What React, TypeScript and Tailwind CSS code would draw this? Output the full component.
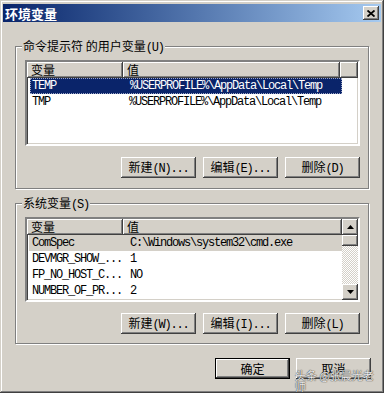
const raised =
  "shadow-[inset_-1px_-1px_#404040,inset_1px_1px_#fff,inset_-2px_-2px_#808080,inset_2px_2px_#d4d0c8]"
const mono = "font-['Liberation_Mono',monospace] text-[12px] tracking-[-1.2px]"

const Label = ({ cn, en }: { cn: string; en: string }) => (
  <span className="whitespace-pre">
    <span>{cn}</span>
    <span className={mono}>{en}</span>
  </span>
)

const Button = ({ children, isDefault }: { children: React.ReactNode; isDefault?: boolean }) => (
  <div className={`w-[75px] h-[21px] ${isDefault ? "border border-black" : ""}`}>
    <div className={`size-full flex items-center justify-center bg-[#d4d0c8] leading-none ${raised}`}>
      {children}
    </div>
  </div>
)

const Group = ({
  legend,
  children,
  className,
}: {
  legend: React.ReactNode
  children: React.ReactNode
  className?: string
}) => (
  <div
    className={`relative ml-[12px] w-[354px] border border-[#808080] shadow-[inset_1px_1px_#fff,1px_1px_#fff] pt-[13px] pl-[9px] ${className}`}
  >
    <div className="absolute left-[6px] -top-[9px] px-[1px] bg-[#d4d0c8] leading-[16px]">{legend}</div>
    {children}
  </div>
)

const Header = ({ children, w }: { children?: React.ReactNode; w: string }) => (
  <div className={`${w} h-[16px] pl-[4px] leading-[16px] bg-[#d4d0c8] ${raised}`}>{children}</div>
)

const sunken =
  "border-2 border-t-[#808080] border-l-[#808080] border-r-white border-b-white shadow-[inset_1px_1px_#404040,inset_-1px_-1px_#d4d0c8] bg-white"

const Arrow = ({ down }: { down?: boolean }) => (
  <svg width="7" height="4" viewBox="0 0 7 4">
    <path d={down ? "M0 0h7L3.5 4z" : "M0 4h7L3.5 0z"} fill="#000" />
  </svg>
)

const sysRows = [
  ["DEVMGR_SHOW_...", "1"],
  ["FP_NO_HOST_C...", "NO"],
  ["NUMBER_OF_PR...", "2"],
]

export default function App() {
  return (
    <div className="relative w-[384px] h-[393px] bg-[#d4d0c8] p-[3px] shadow-[inset_-1px_-1px_#404040,inset_1px_1px_#d4d0c8,inset_-2px_-2px_#808080,inset_2px_2px_#fff] font-['Noto_Sans_CJK_SC',sans-serif] text-[12px] text-black">
      {/* title bar */}
      <div className="mt-[1px] h-[18px] flex items-center justify-between bg-gradient-to-r from-[#0a246a] to-[#a6caf0] pl-[2px] pr-[2px]">
        <span className="text-white font-bold text-[13px] leading-none">环境变量</span>
        <div className={`w-[16px] h-[14px] flex items-center justify-center bg-[#d4d0c8] ${raised}`}>
          <svg width="8" height="7" viewBox="0 0 8 7">
            <path d="M0.5 0.5L7.5 6.5M7.5 0.5L0.5 6.5" stroke="#000" strokeWidth="1.8" />
          </svg>
        </div>
      </div>

      <Group className="mt-[24px] h-[143px]" legend={<Label cn="命令提示符 的用户变量" en="(U)" />}>
        <div className={`w-[335px] h-[86px] ${sunken}`}>
          <div className="flex">
            <Header w="w-[96px]">变量</Header>
            <Header w="w-[217px]">值</Header>
            <Header w="flex-1" />
          </div>
          <div className={`ml-[3px] w-[312px] h-[16px] flex items-center bg-[#0a246a] text-white border border-dotted border-[#9aa3c4] ${mono}`}>
            <span className="w-[99px] pl-[1px]">TEMP</span>
            <span>{"%USERPROFILE%\\AppData\\Local\\Temp"}</span>
          </div>
          <div className={`ml-[3px] w-[312px] h-[16px] flex items-center ${mono}`}>
            <span className="w-[99px] pl-[2px]">TMP</span>
            <span>{"%USERPROFILE%\\AppData\\Local\\Temp"}</span>
          </div>
        </div>
        <div className="mt-[11px] pr-[8px] flex justify-end gap-[7px]">
          <Button><Label cn="新建" en="(N)..." /></Button>
          <Button><Label cn="编辑" en="(E)..." /></Button>
          <Button><Label cn="删除" en="(D)" /></Button>
        </div>
      </Group>

      <Group className="mt-[14px] h-[141px]" legend={<Label cn="系统变量" en="(S)" />}>
        <div className={`w-[335px] h-[85px] flex ${sunken}`}>
          <div className="flex-1 flex flex-col">
            <div className="flex">
              <Header w="w-[96px]">变量</Header>
              <Header w="flex-1">值</Header>
            </div>
            <div className={`ml-[2px] h-[16px] flex items-center bg-[#d4d0c8] ${mono}`}>
              <span className="w-[101px] pl-[3px]">ComSpec</span>
              <span>{"C:\\Windows\\system32\\cmd.exe"}</span>
            </div>
            {sysRows.map(([k, v]) => (
              <div key={k} className={`ml-[2px] h-[16px] flex items-center ${mono}`}>
                <span className="w-[101px] pl-[3px]">{k}</span>
                <span>{v}</span>
              </div>
            ))}
          </div>
          <div className="w-[16px] flex flex-col">
            <div className={`h-[16px] flex items-center justify-center bg-[#d4d0c8] ${raised}`}>
              <Arrow />
            </div>
            <div className={`h-[11px] bg-[#d4d0c8] ${raised}`} />
            <div className="flex-1 bg-[repeating-conic-gradient(#d4d0c8_0_25%,#fff_0_50%)] bg-[length:2px_2px]" />
            <div className={`h-[16px] flex items-center justify-center bg-[#d4d0c8] ${raised}`}>
              <Arrow down />
            </div>
          </div>
        </div>
        <div className="mt-[11px] pr-[8px] flex justify-end gap-[7px]">
          <Button><Label cn="新建" en="(W)..." /></Button>
          <Button><Label cn="编辑" en="(I)..." /></Button>
          <Button><Label cn="删除" en="(L)" /></Button>
        </div>
      </Group>

      <div className="mt-[14px] pr-[10px] flex justify-end gap-[6px]">
        <Button isDefault>确定</Button>
        <Button>取消</Button>
      </div>

      <div className="absolute left-[295px] top-[370px] text-[11px] leading-none text-white/90 [text-shadow:0_0_1px_#333,0_0_1px_#333]">
        头条 @张晨光老师
      </div>
    </div>
  )
}
